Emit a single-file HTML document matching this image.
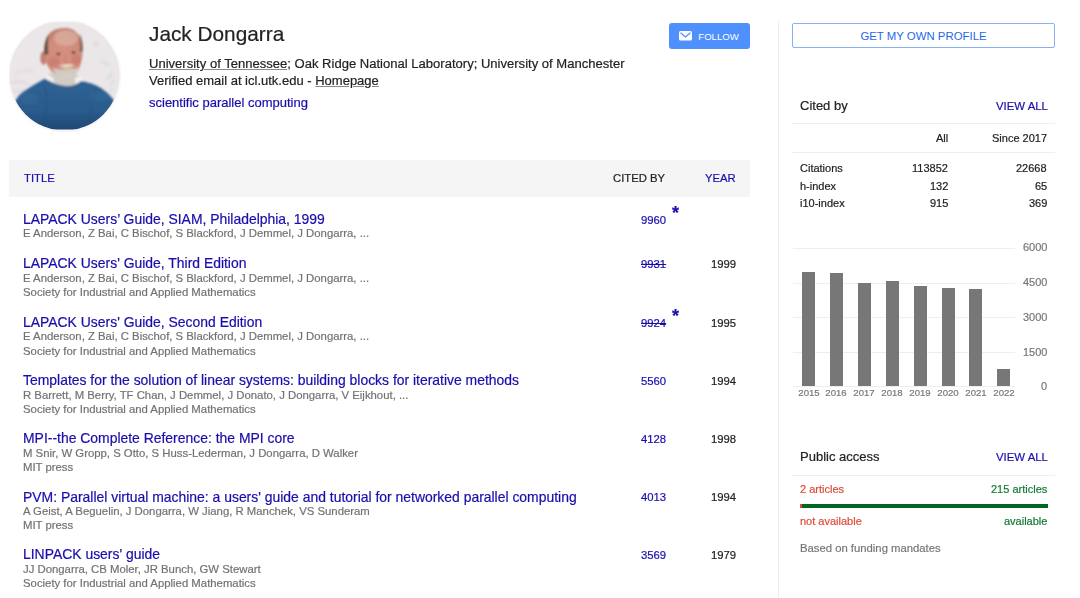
<!DOCTYPE html><html><head><meta charset="utf-8"><style>
html,body{margin:0;padding:0;background:#fff;width:1080px;height:598px;overflow:hidden;position:relative}
body{font-family:"Liberation Sans",sans-serif}
.t{position:absolute;white-space:nowrap;will-change:transform;-webkit-text-stroke:0.2px currentColor}
.follow{position:absolute;left:669px;top:23.4px;width:81px;height:25.2px;background:#4d90fe;border-radius:3px;color:#fff;font-size:9.3px}
.follow span{position:absolute;left:29.3px;top:7.3px;line-height:11px;font-size:9.6px}
.thead{position:absolute;left:9.4px;top:160px;width:740.6px;height:37px;background:#f5f5f5}
.vline{position:absolute;left:778px;top:21px;width:1px;height:600px;background:#eee}
.getprof{position:absolute;left:792px;top:23.3px;width:261px;height:23px;border:1px solid #8ab0f4;border-radius:2px;color:#1f68e8;font-size:11.4px;line-height:25.5px;text-align:center}
.hl{position:absolute;left:792px;width:263px;height:1px;background:#eee}
.grid{position:absolute;left:793px;width:222px;height:1px;background:#eee}
.bar{position:absolute;width:13px;background:#777}
.pabar{position:absolute;left:799.5px;top:504.1px;width:248px;height:3.5px;background:#006621}
.pabar .red{position:absolute;left:0;top:0;width:2.5px;height:3.5px;background:#dd4b39}
.photo{position:absolute;left:9px;top:21px}
</style></head><body>
<div class="t " style="left:149px;top:21.99px;font-size:20.8px;line-height:24px;color:#222;">Jack Dongarra</div>
<div class="t " style="left:149px;top:55.80px;font-size:13px;line-height:15px;color:#222;font-size:13.05px;"><u style="text-decoration-color:#8a8a8a">University of Tennessee</u>; Oak Ridge National Laboratory; University of Manchester</div>
<div class="t " style="left:149px;top:73.00px;font-size:13px;line-height:15px;color:#222;">Verified email at icl.utk.edu - <u style="text-decoration-color:#8a8a8a">Homepage</u></div>
<div class="t " style="left:149px;top:94.80px;font-size:13px;line-height:15px;color:#1a0dab;">scientific parallel computing</div>
<div class="follow"><svg width="13" height="10" viewBox="0 0 13 10" style="position:absolute;left:10px;top:8.1px"><rect x="0" y="0" width="13" height="9.6" rx="1.5" fill="#fff"/><path d="M1.5 1.8 L6.5 6 L11.5 1.8" stroke="#4d90fe" stroke-width="1.2" fill="none"/></svg><span>FOLLOW</span></div>
<div class="thead"></div>
<div class="t " style="left:23.6px;top:171.78px;font-size:11.3px;line-height:13px;color:#1a0dab;">TITLE</div>
<div class="t " style="right:414.5px;top:171.78px;font-size:11.3px;line-height:13px;color:#222;">CITED BY</div>
<div class="t " style="right:344px;top:171.78px;font-size:11.3px;line-height:13px;color:#1a0dab;">YEAR</div>
<div class="t " style="left:23.2px;top:210.97px;font-size:13.93px;line-height:16px;color:#1a0dab;">LAPACK Users’ Guide, SIAM, Philadelphia, 1999</div>
<div class="t " style="left:23.4px;top:227.37px;font-size:11.35px;line-height:13px;color:#727272;">E Anderson, Z Bai, C Bischof, S Blackford, J Demmel, J Dongarra, ...</div>
<div class="t " style="right:414px;top:213.78px;font-size:11.3px;line-height:13px;color:#1a0dab;">9960</div>
<div class="t " style="left:671.5px;top:203.26px;font-size:18px;line-height:21px;color:#1a0dab;font-weight:bold;">*</div>
<div class="t " style="left:23.2px;top:255.47px;font-size:13.93px;line-height:16px;color:#1a0dab;">LAPACK Users' Guide, Third Edition</div>
<div class="t " style="left:23.4px;top:271.87px;font-size:11.35px;line-height:13px;color:#727272;">E Anderson, Z Bai, C Bischof, S Blackford, J Demmel, J Dongarra, ...</div>
<div class="t " style="left:23.4px;top:286.17px;font-size:11.35px;line-height:13px;color:#727272;">Society for Industrial and Applied Mathematics</div>
<div class="t " style="right:414px;top:258.28px;font-size:11.3px;line-height:13px;color:#1a0dab;text-decoration:line-through;text-decoration-thickness:0.7px;">9931</div>
<div class="t " style="right:344px;top:258.28px;font-size:11.3px;line-height:13px;color:#222;">1999</div>
<div class="t " style="left:23.2px;top:313.87px;font-size:13.93px;line-height:16px;color:#1a0dab;">LAPACK Users' Guide, Second Edition</div>
<div class="t " style="left:23.4px;top:330.27px;font-size:11.35px;line-height:13px;color:#727272;">E Anderson, Z Bai, C Bischof, S Blackford, J Demmel, J Dongarra, ...</div>
<div class="t " style="left:23.4px;top:344.57px;font-size:11.35px;line-height:13px;color:#727272;">Society for Industrial and Applied Mathematics</div>
<div class="t " style="right:414px;top:316.68px;font-size:11.3px;line-height:13px;color:#1a0dab;text-decoration:line-through;text-decoration-thickness:0.7px;">9924</div>
<div class="t " style="left:671.5px;top:306.16px;font-size:18px;line-height:21px;color:#1a0dab;font-weight:bold;">*</div>
<div class="t " style="right:344px;top:316.68px;font-size:11.3px;line-height:13px;color:#222;">1995</div>
<div class="t " style="left:23.2px;top:372.17px;font-size:13.93px;line-height:16px;color:#1a0dab;">Templates for the solution of linear systems: building blocks for iterative methods</div>
<div class="t " style="left:23.4px;top:388.57px;font-size:11.35px;line-height:13px;color:#727272;">R Barrett, M Berry, TF Chan, J Demmel, J Donato, J Dongarra, V Eijkhout, ...</div>
<div class="t " style="left:23.4px;top:402.87px;font-size:11.35px;line-height:13px;color:#727272;">Society for Industrial and Applied Mathematics</div>
<div class="t " style="right:414px;top:374.98px;font-size:11.3px;line-height:13px;color:#1a0dab;">5560</div>
<div class="t " style="right:344px;top:374.98px;font-size:11.3px;line-height:13px;color:#222;">1994</div>
<div class="t " style="left:23.2px;top:430.27px;font-size:13.93px;line-height:16px;color:#1a0dab;">MPI--the Complete Reference: the MPI core</div>
<div class="t " style="left:23.4px;top:446.67px;font-size:11.35px;line-height:13px;color:#727272;">M Snir, W Gropp, S Otto, S Huss-Lederman, J Dongarra, D Walker</div>
<div class="t " style="left:23.4px;top:460.97px;font-size:11.35px;line-height:13px;color:#727272;">MIT press</div>
<div class="t " style="right:414px;top:433.08px;font-size:11.3px;line-height:13px;color:#1a0dab;">4128</div>
<div class="t " style="right:344px;top:433.08px;font-size:11.3px;line-height:13px;color:#222;">1998</div>
<div class="t " style="left:23.2px;top:488.57px;font-size:13.93px;line-height:16px;color:#1a0dab;">PVM: Parallel virtual machine: a users' guide and tutorial for networked parallel computing</div>
<div class="t " style="left:23.4px;top:504.97px;font-size:11.35px;line-height:13px;color:#727272;">A Geist, A Beguelin, J Dongarra, W Jiang, R Manchek, VS Sunderam</div>
<div class="t " style="left:23.4px;top:519.27px;font-size:11.35px;line-height:13px;color:#727272;">MIT press</div>
<div class="t " style="right:414px;top:491.38px;font-size:11.3px;line-height:13px;color:#1a0dab;">4013</div>
<div class="t " style="right:344px;top:491.38px;font-size:11.3px;line-height:13px;color:#222;">1994</div>
<div class="t " style="left:23.2px;top:546.27px;font-size:13.93px;line-height:16px;color:#1a0dab;">LINPACK users' guide</div>
<div class="t " style="left:23.4px;top:562.67px;font-size:11.35px;line-height:13px;color:#727272;">JJ Dongarra, CB Moler, JR Bunch, GW Stewart</div>
<div class="t " style="left:23.4px;top:576.97px;font-size:11.35px;line-height:13px;color:#727272;">Society for Industrial and Applied Mathematics</div>
<div class="t " style="right:414px;top:549.08px;font-size:11.3px;line-height:13px;color:#1a0dab;">3569</div>
<div class="t " style="right:344px;top:549.08px;font-size:11.3px;line-height:13px;color:#222;">1979</div>
<div class="vline"></div>
<div class="getprof">GET MY OWN PROFILE</div>
<div class="t " style="left:800px;top:97.50px;font-size:13px;line-height:15px;color:#222;">Cited by</div>
<div class="t " style="right:32.5px;top:99.55px;font-size:11.4px;line-height:13px;color:#1a0dab;">VIEW ALL</div>
<div class="hl" style="top:123px"></div><div class="hl" style="top:152px"></div>
<div class="t " style="right:132px;top:131.69px;font-size:11px;line-height:13px;color:#222;">All</div>
<div class="t " style="right:33px;top:131.69px;font-size:11px;line-height:13px;color:#222;">Since 2017</div>
<div class="t " style="left:800px;top:162.19px;font-size:11px;line-height:13px;color:#222;">Citations</div>
<div class="t " style="right:132px;top:162.19px;font-size:11px;line-height:13px;color:#222;">113852</div>
<div class="t " style="right:33px;top:162.19px;font-size:11px;line-height:13px;color:#222;">22668</div>
<div class="t " style="left:800px;top:179.69px;font-size:11px;line-height:13px;color:#222;">h-index</div>
<div class="t " style="right:132px;top:179.69px;font-size:11px;line-height:13px;color:#222;">132</div>
<div class="t " style="right:33px;top:179.69px;font-size:11px;line-height:13px;color:#222;">65</div>
<div class="t " style="left:800px;top:196.69px;font-size:11px;line-height:13px;color:#222;">i10-index</div>
<div class="t " style="right:132px;top:196.69px;font-size:11px;line-height:13px;color:#222;">915</div>
<div class="t " style="right:33px;top:196.69px;font-size:11px;line-height:13px;color:#222;">369</div>
<div class="grid" style="top:247.6px"></div>
<div class="t " style="right:33px;top:241.29px;font-size:11px;line-height:13px;color:#777;">6000</div>
<div class="grid" style="top:282.6px"></div>
<div class="t " style="right:33px;top:276.29px;font-size:11px;line-height:13px;color:#777;">4500</div>
<div class="grid" style="top:317.3px"></div>
<div class="t " style="right:33px;top:310.99px;font-size:11px;line-height:13px;color:#777;">3000</div>
<div class="grid" style="top:352.0px"></div>
<div class="t " style="right:33px;top:345.69px;font-size:11px;line-height:13px;color:#777;">1500</div>
<div class="grid" style="top:386.0px"></div>
<div class="t " style="right:33px;top:379.69px;font-size:11px;line-height:13px;color:#777;">0</div>
<div class="bar" style="left:802.0px;top:272.4px;height:113.6px"></div>
<div class="t " style="left:808.5px;top:387.37px;font-size:9.6px;line-height:11px;color:#777;transform:translateX(-50%);">2015</div>
<div class="bar" style="left:829.9px;top:273.4px;height:112.6px"></div>
<div class="t " style="left:836.4px;top:387.37px;font-size:9.6px;line-height:11px;color:#777;transform:translateX(-50%);">2016</div>
<div class="bar" style="left:857.8px;top:283.0px;height:103.0px"></div>
<div class="t " style="left:864.3px;top:387.37px;font-size:9.6px;line-height:11px;color:#777;transform:translateX(-50%);">2017</div>
<div class="bar" style="left:885.7px;top:281.0px;height:105.0px"></div>
<div class="t " style="left:892.2px;top:387.37px;font-size:9.6px;line-height:11px;color:#777;transform:translateX(-50%);">2018</div>
<div class="bar" style="left:913.6px;top:285.5px;height:100.5px"></div>
<div class="t " style="left:920.1px;top:387.37px;font-size:9.6px;line-height:11px;color:#777;transform:translateX(-50%);">2019</div>
<div class="bar" style="left:941.5px;top:288.0px;height:98.0px"></div>
<div class="t " style="left:948.0px;top:387.37px;font-size:9.6px;line-height:11px;color:#777;transform:translateX(-50%);">2020</div>
<div class="bar" style="left:969.4px;top:289.0px;height:97.0px"></div>
<div class="t " style="left:975.9px;top:387.37px;font-size:9.6px;line-height:11px;color:#777;transform:translateX(-50%);">2021</div>
<div class="bar" style="left:997.3px;top:369.0px;height:17.0px"></div>
<div class="t " style="left:1003.8px;top:387.37px;font-size:9.6px;line-height:11px;color:#777;transform:translateX(-50%);">2022</div>
<div class="t " style="left:800px;top:449.00px;font-size:13px;line-height:15px;color:#222;">Public access</div>
<div class="t " style="right:32.5px;top:450.55px;font-size:11.4px;line-height:13px;color:#1a0dab;">VIEW ALL</div>
<div class="hl" style="top:475px"></div>
<div class="t " style="left:800px;top:482.69px;font-size:11px;line-height:13px;color:#dd4b39;">2 articles</div>
<div class="t " style="right:33px;top:482.69px;font-size:11px;line-height:13px;color:#137a34;">215 articles</div>
<div class="pabar"><div class="red"></div></div>
<div class="t " style="left:800px;top:514.69px;font-size:11px;line-height:13px;color:#dd4b39;">not available</div>
<div class="t " style="right:33px;top:514.69px;font-size:11px;line-height:13px;color:#137a34;">available</div>
<div class="t " style="left:800px;top:541.58px;font-size:11.3px;line-height:13px;color:#777;">Based on funding mandates</div>
<svg class="photo" width="112" height="112" viewBox="0 0 112 112">
<defs><clipPath id="c"><circle cx="55.5" cy="54.5" r="55"/></clipPath><clipPath id="r"><rect x="0" y="1.3" width="112" height="107.3"/></clipPath>
<filter id="b" x="-10%" y="-10%" width="120%" height="120%"><feGaussianBlur stdDeviation="0.9"/></filter>
<filter id="b2" x="-20%" y="-20%" width="140%" height="140%"><feGaussianBlur stdDeviation="1.6"/></filter>
<radialGradient id="face" cx="0.5" cy="0.55" r="0.6"><stop offset="0" stop-color="#d88f82"/><stop offset="0.7" stop-color="#cf8c7c"/><stop offset="1" stop-color="#b87868"/></radialGradient>
<linearGradient id="sw" x1="0" y1="0" x2="0" y2="1"><stop offset="0" stop-color="#2f6294"/><stop offset="0.6" stop-color="#2a5b8c"/><stop offset="1" stop-color="#1d4470"/></linearGradient>
</defs>
<g filter="url(#b)"><ellipse cx="55.5" cy="55" rx="55.2" ry="55" fill="none" stroke="#d0d0d0" stroke-width="1" opacity="0.7"/></g>
<g clip-path="url(#r)"><g clip-path="url(#c)">
<rect width="112" height="112" fill="#ebe7e8"/>

<g filter="url(#b2)" opacity="0.55">
<path d="M2 62 Q12 58 20 64 M4 70 Q14 72 24 66" stroke="#c9a3c0" stroke-width="1" fill="none"/>
<path d="M6 52 Q16 48 24 50" stroke="#c7b7d6" stroke-width="1" fill="none"/>
<path d="M92 40 L100 44 M98 58 L104 52" stroke="#8fc4c8" stroke-width="1.2" fill="none"/>
<path d="M84 22 L90 24" stroke="#b89a9a" stroke-width="1.2" fill="none"/>
<path d="M101 63 L106 60 M100 70 L105 68" stroke="#9ac0dc" stroke-width="1.2" fill="none"/>
</g>
<g filter="url(#b)">
<ellipse cx="34.5" cy="37" rx="3.2" ry="6.8" fill="#c27f72"/>
<path d="M56 7 C66 7 73 14 73.5 27 C74 38 71 48 66 54 C62 58 54 60 48 56 C42 51 37 44 35.5 36 C34 26 36 16 42 11 C46 8 50 7 56 7 Z" fill="url(#face)"/>
<ellipse cx="57" cy="17" rx="12" ry="8" fill="#dcb0a2" opacity="0.7"/>
<ellipse cx="45" cy="41" rx="6" ry="5" fill="#c97568" opacity="0.55"/>
<ellipse cx="67" cy="39" rx="5" ry="5" fill="#c97568" opacity="0.55"/>
<path d="M35.6 34 Q34.5 22 39.5 13.5 Q38 24 39.2 33 Z" fill="#5a4842"/>
<path d="M73.3 31 Q74.5 20 70.5 12.5 Q72.3 22 70.8 30 Z" fill="#6a5850"/>
<ellipse cx="49.5" cy="33" rx="2.1" ry="1.2" fill="#5a3c38"/>
<ellipse cx="64.5" cy="31.5" rx="2" ry="1.2" fill="#5a3c38"/>
<path d="M57 33 Q56 39 55.5 41 Q58 42.5 61 41.5" stroke="#b56a5e" stroke-width="1" fill="none" opacity="0.55"/>
<path d="M44 47 Q46 55 51 59.5 Q59 63 64.5 58.5 Q68.5 52 69 46 Q66 48.5 63 47.5 Q58 49.5 52 48.5 Q47 48.5 44 47 Z" fill="#d2c9c3"/>
<path d="M49.5 45 Q58 41.8 66 44.3 Q58 46.8 49.5 45 Z" fill="#ece6e2"/>
<ellipse cx="58.3" cy="47" rx="4.8" ry="1.6" fill="#d8c48a"/>
<ellipse cx="58" cy="55" rx="6" ry="3.5" fill="#d6cec8" opacity="0.7"/>
</g>
<g filter="url(#b)">
<path d="M39 53 Q42 51 46 53 Q55 58 65 54 Q69 53 71 57 L72 64 Q62 68 52 67 Q43 65 38 59 Z" fill="#d3cbc5"/>
<path d="M37 54 Q40 53 44 57 Q46 61 45 64 Q40 62 36 59 Z" fill="#f3f1ef"/>
<path d="M66 57 Q70 55 73 56 L74 64 Q70 65 67 65 Q66 61 66 57 Z" fill="#f3f1ef"/>
<path d="M0 112 L2 92 Q6 76 14 71 Q24 64 36 57.5 Q46 64 57 65 Q66 65.5 72 60 Q84 62 92 67 Q102 74 108 84 L112 112 Z" fill="url(#sw)"/>

<path d="M33 62 Q40 70 37 90 Q35 100 33 112" stroke="#234a73" stroke-width="1" fill="none" opacity="0.6"/>
<path d="M88 66 Q80 80 80 112" stroke="#234a73" stroke-width="0.8" fill="none" opacity="0.4"/>
</g>
<g filter="url(#b2)"><ellipse cx="20" cy="78" rx="10" ry="6" fill="#3d70a0" opacity="0.35"/><ellipse cx="90" cy="76" rx="10" ry="5" fill="#3d70a0" opacity="0.3"/></g>
</g></g>
</svg>
</body></html>
